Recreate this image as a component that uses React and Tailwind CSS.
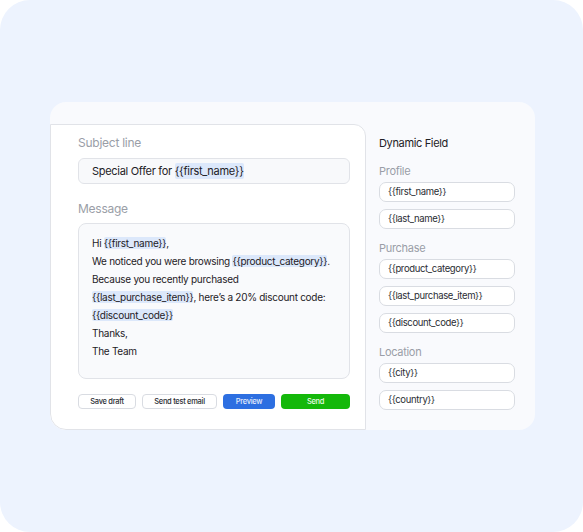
import React from "react";

const Tag = ({ children }) => (
  <span className="bg-[#dce8fb] rounded-[2px]">{children}</span>
);

const fieldGroups = [
  { label: "Profile", items: ["{{first_name}}", "{{last_name}}"] },
  {
    label: "Purchase",
    items: ["{{product_category}}", "{{last_purchase_item}}", "{{discount_code}}"],
  },
  { label: "Location", items: ["{{city}}", "{{country}}"] },
];

export default function App() {
  return (
    <div className="w-[583px] h-[532px] bg-white">
      <div
        className="w-full h-full rounded-[30px] bg-[#edf3fe] pt-[102px] pl-[50px]"
        style={{ fontFamily: "Inter, 'Liberation Sans', sans-serif" }}
      >
        <div className="w-[485px] h-[328px] rounded-2xl bg-[#f9fafd] overflow-hidden flex">
          {/* Composer */}
          <div className="mt-[22px] w-[316px] h-[306px] bg-white border border-[#e1e3e8] rounded-tr-xl rounded-bl-2xl pl-[27px] pr-[15px] pt-[10px]">
            <div className="text-[12px] leading-4 tracking-[-0.25px] text-[#9a9ea7]">Subject line</div>
            <div className="mt-[7px] h-[26px] rounded-md border border-[#e1e3e8] bg-[#f8f9fb] pl-[13px] flex items-center text-[11px] tracking-[-0.3px] text-[#1e2126]">
              Special Offer for&nbsp;<Tag>{"{{first_name}}"}</Tag>
            </div>
            <div className="mt-[17px] text-[12px] leading-4 tracking-[-0.25px] text-[#9a9ea7]">Message</div>
            <div className="mt-[6px] h-[156px] rounded-lg border border-[#e1e3e8] bg-[#f9fafc] pl-[13px] pt-[10px] text-[10px] leading-[18px] tracking-[-0.28px] text-[#1e2126]">
              <div>
                Hi <Tag>{"{{first_name}}"}</Tag>,
              </div>
              <div>
                We noticed you were browsing <Tag>{"{{product_category}}"}</Tag>.
              </div>
              <div>Because you recently purchased</div>
              <div>
                <Tag>{"{{last_purchase_item}}"}</Tag>, here’s a 20% discount code:
              </div>
              <div>
                <Tag>{"{{discount_code}}"}</Tag>
              </div>
              <div>Thanks,</div>
              <div>The Team</div>
            </div>
            <div className="mt-[15px] flex gap-[6px] h-[15px] text-[7.5px] font-medium tracking-[-0.3px]">
              <button className="w-[58px] rounded-[4px] border border-[#d9dce2] bg-white text-[#2a2d33]">
                Save draft
              </button>
              <button className="w-[75px] rounded-[4px] border border-[#d9dce2] bg-white text-[#2a2d33]">
                Send test email
              </button>
              <button className="w-[52px] rounded-[4px] bg-[#2d6fe1] text-[#e4ecfb]">
                Preview
              </button>
              <button className="flex-1 rounded-[4px] bg-[#14b80a] text-[#eafbe8]">
                Send
              </button>
            </div>
          </div>

          {/* Dynamic fields */}
          <div className="flex-1 pl-[13px] pt-[33px]">
            <div className="text-[11px] leading-4 tracking-[-0.35px] text-[#1e2126]">Dynamic Field</div>
            {fieldGroups.map((group, i) => (
              <div key={group.label} className={i === 0 ? "mt-[12px]" : "mt-[11px]"}>
                <div className="text-[11px] leading-4 tracking-[-0.3px] text-[#9a9ea7]">{group.label}</div>
                <div className="mt-[3px] flex flex-col gap-[7px]">
                  {group.items.map((item) => (
                    <div
                      key={item}
                      className="w-[136px] h-5 rounded-[7px] border border-[#d9dce2] bg-white pl-2 flex items-center text-[9.5px] tracking-[-0.35px] text-[#2a2d33]"
                    >
                      {item}
                    </div>
                  ))}
                </div>
              </div>
            ))}
          </div>
        </div>
      </div>
    </div>
  );
}
